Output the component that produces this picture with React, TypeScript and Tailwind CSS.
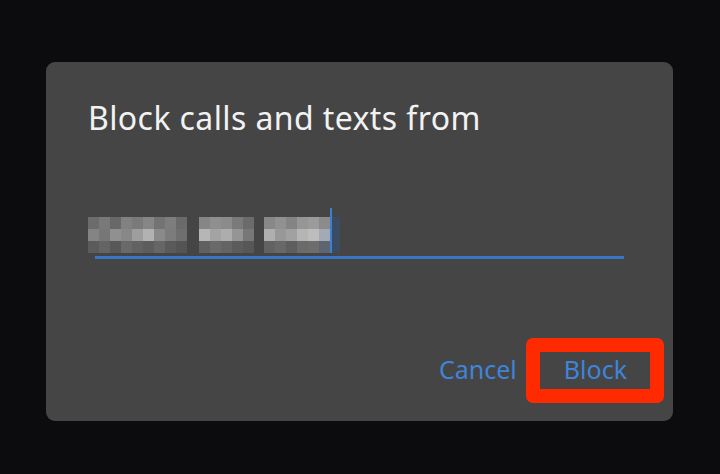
import React from "react";

const rows: string[][] = [
  ["bg-[#6f6f6f]", "bg-[#7c7c7c]", "bg-[#6a6a6a]", "bg-[#858585]", "bg-[#7d7d7d]", "bg-[#8a8a8a]", "bg-[#767676]", "bg-[#818181]", "bg-[#6c6c6c]"],
  ["bg-[#888888]", "bg-[#7a7a7a]", "bg-[#959595]", "bg-[#8c8c8c]", "bg-[#a3a3a3]", "bg-[#b8b8b8]", "bg-[#8e8e8e]", "bg-[#7f7f7f]", "bg-[#727272]"],
  ["bg-[#5d5d5d]", "bg-[#666666]", "bg-[#5a5a5a]", "bg-[#6b6b6b]", "bg-[#646464]", "bg-[#5f5f5f]", "bg-[#686868]", "bg-[#5c5c5c]", "bg-[#555555]"],
];
const rows2: string[][] = [
  ["bg-[#8a8a8a]", "bg-[#939393]", "bg-[#8f8f8f]", "bg-[#7d7d7d]", "bg-[#6e6e6e]"],
  ["bg-[#bdbdbd]", "bg-[#a9a9a9]", "bg-[#b3b3b3]", "bg-[#9a9a9a]", "bg-[#7a7a7a]"],
  ["bg-[#626262]", "bg-[#6c6c6c]", "bg-[#666666]", "bg-[#5e5e5e]", "bg-[#585858]"],
];
const rows3: string[][] = [
  ["bg-[#8c8c8c]", "bg-[#969696]", "bg-[#888888]", "bg-[#9b9b9b]", "bg-[#a0a0a0]", "bg-[#8f8f8f]"],
  ["bg-[#b5b5b5]", "bg-[#9d9d9d]", "bg-[#a6a6a6]", "bg-[#bcbcbc]", "bg-[#c4c4c4]", "bg-[#a8b0bd]"],
  ["bg-[#646464]", "bg-[#6a6a6a]", "bg-[#606060]", "bg-[#6e6e6e]", "bg-[#707070]", "bg-[#5f6775]"],
];

// pixelated (redacted) phone number
const Mosaic = ({ data }: { data: string[][] }) => (
  <div className="flex flex-col">
    {data.map((r, i) => (
      <div key={i} className="flex">
        {r.map((c, j) => (
          <div key={j} className={`h-[12px] w-[11px] ${c}`} />
        ))}
      </div>
    ))}
  </div>
);

export default function App() {
  return (
    <div className="h-[474px] w-[720px] bg-[#0c0c0f] pl-[46px] pt-[62px] font-['Noto_Sans',sans-serif]">
      <div className="relative flex h-[359px] w-[627px] flex-col rounded-[9px] bg-[#454545] px-[42px]">
        <h1 className="mt-[32px] text-[32px] leading-[48px] tracking-[0.4px] text-[#f2f2f2]">
          Block calls and texts from
        </h1>

        <div className="mt-[66px] flex items-end">
          <div className="mt-[9px] flex opacity-95">
            <Mosaic data={rows} />
            <div className="w-[12px]" />
            <Mosaic data={rows2} />
            <div className="w-[10px]" />
            <Mosaic data={rows3} />
          </div>
          <div className="h-[45px] w-[2px] bg-[#3e7fd6]" />
          <div className="h-[36px] w-[8px] bg-[#3b4c62]" />
        </div>
        <div className="ml-[7px] mt-[3px] h-[3px] w-[529px] bg-[#3b74c6]" />

        <div className="mt-auto mb-[37px] flex items-center justify-end gap-[47px] pr-[4px] text-[25px] leading-[30px] text-[#3f84d8]">
          <span>Cancel</span>
          <span className="relative">
            Block
            <span className="absolute -left-[38px] -top-[16px] h-[65px] w-[138px] rounded-[7px] border-[14px] border-[#ff2a00]" />
          </span>
        </div>
      </div>
    </div>
  );
}
